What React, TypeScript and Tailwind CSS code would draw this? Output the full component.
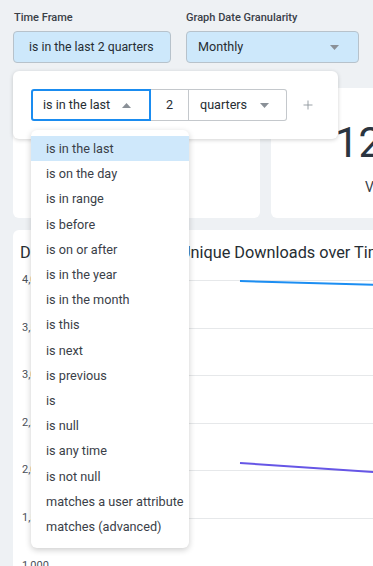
import { Plus } from 'lucide-react'

const options = [
  'is in the last',
  'is on the day',
  'is in range',
  'is before',
  'is on or after',
  'is in the year',
  'is in the month',
  'is this',
  'is next',
  'is previous',
  'is',
  'is null',
  'is any time',
  'is not null',
  'matches a user attribute',
  'matches (advanced)',
]

const yLabels = ['4,000', '3,500', '3,000', '2,500', '2,000', '1,500', '1,000']

function CaretDown() {
  return (
    <svg width="9" height="5" viewBox="0 0 9 5" className="shrink-0">
      <path d="M0 0 L9 0 L4.5 5 Z" fill="#8a9097" />
    </svg>
  )
}

function CaretUp() {
  return (
    <svg width="9" height="5" viewBox="0 0 9 5" className="shrink-0">
      <path d="M0 5 L9 5 L4.5 0 Z" fill="#8a9097" />
    </svg>
  )
}

export default function App() {
  return (
    <div className="relative w-[373px] h-[566px] overflow-hidden bg-[#eef1f4] font-['Roboto',sans-serif] text-[#262d33]">
      {/* Filters */}
      <div className="flex gap-[15px] pl-[13px] pt-[12px]">
        <div className="flex flex-col">
          <span className="text-[11px] leading-[12px] font-medium text-[#3a4048] pl-px">Time Frame</span>
          <button className="mt-[7px] w-[158px] h-8 rounded-[4px] border border-[#b7c2cb] bg-[#cde8fb] text-[12.3px] text-left pl-[15px]">
            is in the last 2 quarters
          </button>
        </div>
        <div className="flex flex-col">
          <span className="text-[11px] leading-[12px] font-medium text-[#3a4048]">Graph Date Granularity</span>
          <button className="mt-[7px] w-[173px] h-8 rounded-[4px] border border-[#b7c2cb] bg-[#cde8fb] text-[12.6px] flex items-center justify-between pl-[11px] pr-[19px]">
            <span>Monthly</span>
            <CaretDown />
          </button>
        </div>
      </div>

      {/* Tiles */}
      <div className="flex gap-[11px] pl-[13px] mt-[25px]">
        <div className="w-[247px] h-[130px] shrink-0 bg-white rounded-md" />
        <div className="w-[200px] h-[130px] shrink-0 bg-white rounded-md flex flex-col items-start pl-[64px] pt-[34px]">
          <span className="text-[42px] leading-[42px] text-[#2a3440]">128</span>
          <span className="text-[14px] text-[#3a4048] mt-[13px] pl-[30px]">Visits</span>
        </div>
      </div>

      {/* Chart */}
      <div className="relative w-[420px] h-[400px] ml-[13px] mt-[12px] bg-white rounded-md">
        <div className="pl-[7px] pt-[13px] text-[16.3px] leading-[20px] whitespace-nowrap text-[#262d33]">
          Daily Visits and Daily <span className="ml-[6px]">Unique Downloads over Time</span>
        </div>
        <div className="mt-[17px] flex flex-col">
          {yLabels.map((l) => (
            <div key={l} className="h-[47.6px] flex items-start">
              <span className="w-[42px] shrink-0 pl-[9px] -mt-[6px] text-[11px] leading-[12px] text-[#4a5058]">{l}</span>
              <div className="flex-1 border-t border-[#e6e8ea]" />
            </div>
          ))}
        </div>
        <svg className="absolute left-0 top-0" width="420" height="400">
          <path d="M227 51 L420 56.5" stroke="#1c8ef2" strokeWidth="2" fill="none" />
          <path d="M227 233 L420 246" stroke="#6656e6" strokeWidth="2" fill="none" />
        </svg>
      </div>

      {/* Time frame popover */}
      <div className="absolute left-[13px] top-[71px] w-[325px] h-[68px] bg-white rounded-md shadow-[0_1px_4px_rgba(0,0,0,0.18)] flex items-center pl-[18px]">
        <div className="w-[120px] h-8 border-2 border-[#1a8cf0] rounded-l-[3px] flex items-center justify-between pl-[10px] pr-[18px] text-[12.6px]">
          <span>is in the last</span>
          <CaretUp />
        </div>
        <div className="w-[38px] h-8 border-y border-r border-[#c4c8cc] flex items-center justify-center text-[12.6px]">2</div>
        <div className="w-[98px] h-8 border-y border-r border-[#c4c8cc] rounded-r-[3px] flex items-center justify-between pl-[11px] pr-[17px] text-[12.6px]">
          <span>quarters</span>
          <CaretDown />
        </div>
        <Plus className="ml-[14px] w-[14px] h-[14px] text-[#8d939a]" strokeWidth={1.5} />
      </div>

      {/* Operator dropdown */}
      <div className="absolute left-[31px] top-[130px] w-[158px] h-[418px] bg-white rounded-md shadow-[0_2px_6px_rgba(0,0,0,0.2)] pt-[6px]">
        {options.map((o, i) => (
          <div
            key={o}
            className={`h-[25.2px] px-[15px] flex items-center text-[12.7px] whitespace-nowrap text-[#3a4048] ${
              i === 0 ? 'bg-[#cfe8fb]' : ''
            }`}
          >
            {o}
          </div>
        ))}
      </div>
    </div>
  )
}
